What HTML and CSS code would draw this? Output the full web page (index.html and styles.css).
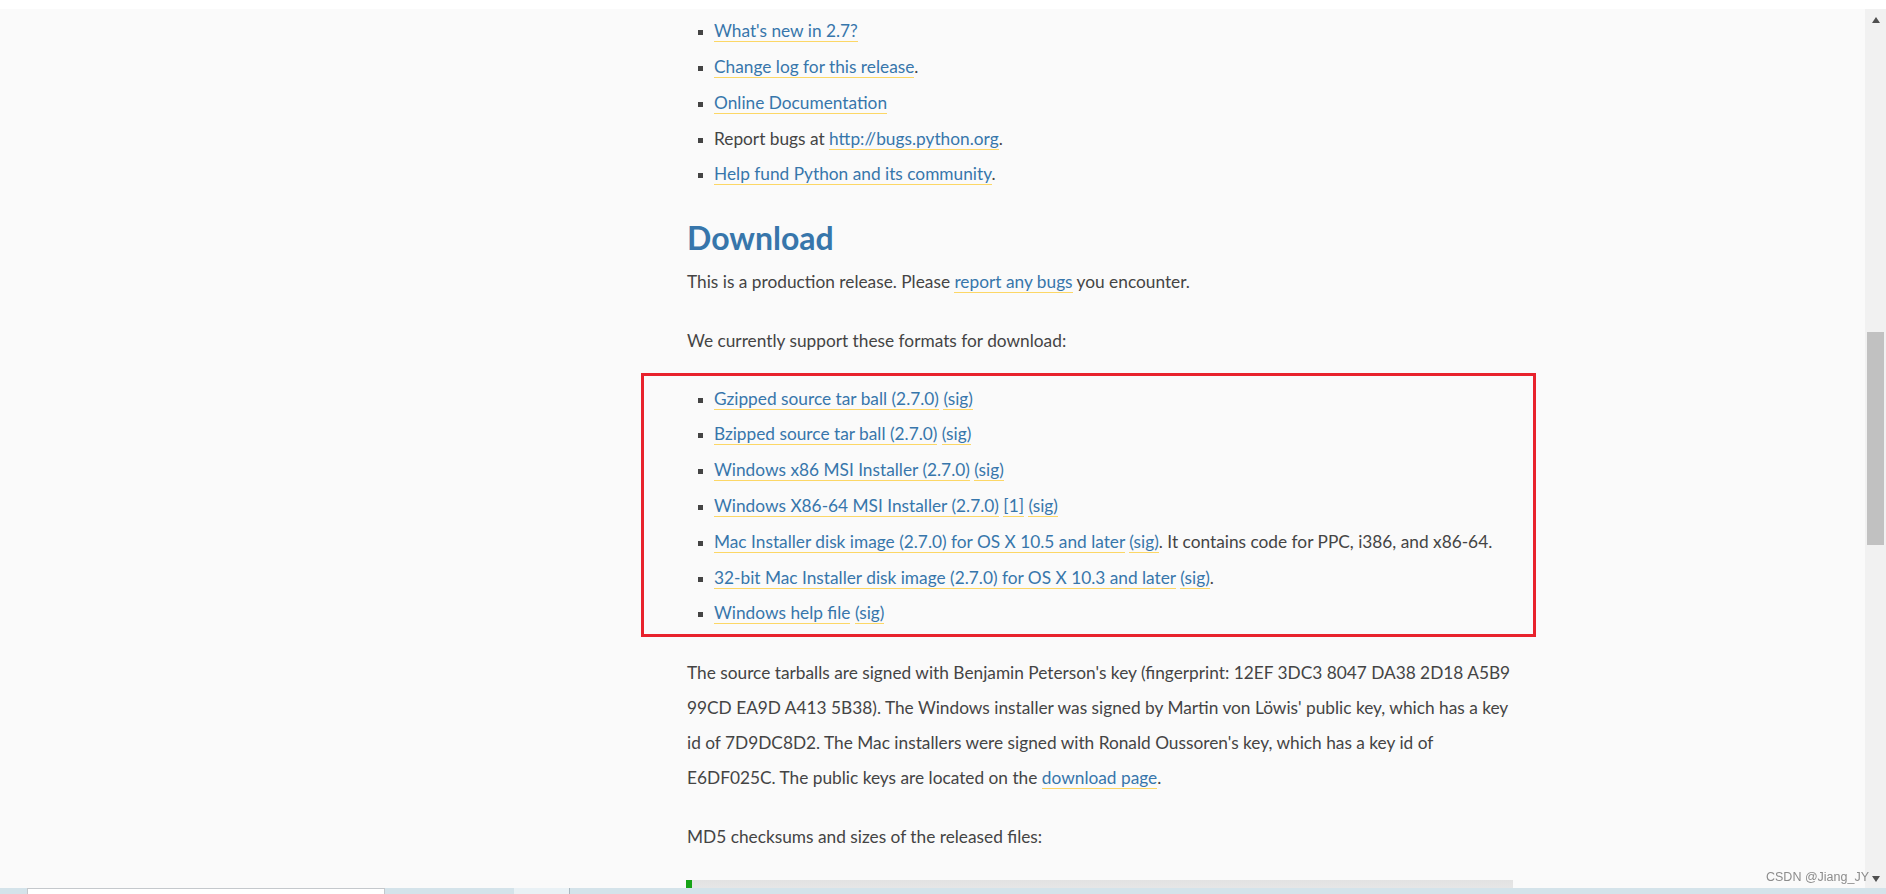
FILE: index.html
```html
<!DOCTYPE html>
<html lang="en">
<head>
    <meta charset="UTF-8">
    <meta name="viewport" content="width=device-width, initial-scale=1.0">
    <title>Python 2.7.0 Release</title>
    <link rel="stylesheet" href="styles.css">
</head>
<body>
    <div class="topline"></div>
    <div class="window">
        <div class="page">
            <div class="content">
                <ul class="links">
                    <li><a href="#">What's new in 2.7?</a></li>
                    <li><a href="#">Change log for this release</a>.</li>
                    <li><a href="#">Online Documentation</a></li>
                    <li>Report bugs at <a href="#">http://bugs.python.org</a>.</li>
                    <li><a href="#">Help fund Python and its community</a>.</li>
                </ul>
                <h2>Download</h2>
                <p class="intro">This is a production release. Please <a href="#">report any bugs</a> you encounter.</p>
                <p class="lead">We currently support these formats for download:</p>
                <div class="highlight">
                    <ul class="links">
                        <li><a href="#">Gzipped source tar ball (2.7.0)</a> <a href="#">(sig)</a></li>
                        <li><a href="#">Bzipped source tar ball (2.7.0)</a> <a href="#">(sig)</a></li>
                        <li><a href="#">Windows x86 MSI Installer (2.7.0)</a> <a href="#">(sig)</a></li>
                        <li><a href="#">Windows X86-64 MSI Installer (2.7.0)</a> <a href="#">[1]</a> <a href="#">(sig)</a></li>
                        <li><a href="#">Mac Installer disk image (2.7.0) for OS X 10.5 and later</a> <a href="#">(sig)</a>. It contains code for PPC, i386, and x86-64.</li>
                        <li><a href="#">32-bit Mac Installer disk image (2.7.0) for OS X 10.3 and later</a> <a href="#">(sig)</a>.</li>
                        <li><a href="#">Windows help file</a> <a href="#">(sig)</a></li>
                    </ul>
                </div>
                <p class="keys">The source tarballs are signed with Benjamin Peterson's key (fingerprint: 12EF 3DC3 8047 DA38 2D18 A5B9 99CD EA9D A413 5B38). The Windows installer was signed by Martin von Löwis' public key, which has a key id of 7D9DC8D2. The Mac installers were signed with Ronald Oussoren's key, which has a key id of E6DF025C. The public keys are located on the <a href="#">download page</a>.</p>
                <p class="md5">MD5 checksums and sizes of the released files:</p>
                <div class="table-head"><span class="mark"></span><span class="bar"></span></div>
            </div>
        </div>
        <div class="scrollbar">
            <span class="arrow-up"></span>
            <div class="thumb"></div>
            <span class="arrow-down"></span>
        </div>
    </div>
    <div class="taskbar">
        <div class="task-input"></div>
        <div class="task-gap"></div>
        <div class="task-light"></div>
        <div class="task-rest"></div>
    </div>
    <div class="watermark">CSDN @Jiang_JY</div>
</body>
</html>
```
FILE: styles.css
```css
*{
    margin: 0;
    padding: 0;
    box-sizing: border-box;
}
html, body{
    width: 1886px;
    height: 894px;
    overflow: hidden;
}
body{
    font-family: Lato, "Liberation Sans", sans-serif;
    font-size: 17.3px;
    line-height: 35.8px;
    color: #444444;
    background-color: #ffffff;
    display: flex;
    flex-direction: column;
}
a{
    color: #3776ab;
    text-decoration: none;
    border-bottom: 1px solid #fcd766;
}
.topline{
    height: 9px;
    background-color: #ffffff;
}
.window{
    height: 879px;
    display: flex;
}
.page{
    flex: 1;
    background-color: #fafafa;
    overflow: hidden;
}
.content{
    margin-left: 687px;
    width: 831px;
}
.links{
    list-style-type: square;
    padding-left: 27px;
}
.links li::marker{
    color: #444444;
    font-size: 14px;
}
.content > .links{
    margin-top: 4.3px;
}
h2{
    color: #3776ab;
    font-size: 32px;
    font-weight: bold;
    line-height: 40px;
    margin: 25.3px 0 6.2px;
}
.intro{
    margin-bottom: 23.6px;
}
.lead{
    margin-bottom: 13.8px;
}
.highlight{
    margin: 0 -18px 18px -46px;
    padding: 4.8px 0 2.4px 43px;
    border: 3px solid #e8222c;
}
.keys{
    line-height: 35.3px;
    margin-bottom: 23.6px;
}
.md5{
    margin-bottom: 25.4px;
}
.table-head{
    display: flex;
    width: 826px;
    height: 20px;
}
.table-head .mark{
    width: 6px;
    background-color: #16a316;
    margin-left: -1px;
}
.table-head .bar{
    flex: 1;
    background: linear-gradient(#e2e2e2, #ececec);
}
.scrollbar{
    width: 21px;
    background-color: #f1f1f1;
    display: flex;
    flex-direction: column;
    align-items: center;
}
.arrow-up{
    margin-top: 8px;
    width: 0;
    height: 0;
    border-left: 4.5px solid transparent;
    border-right: 4.5px solid transparent;
    border-bottom: 6px solid #505050;
}
.thumb{
    margin-top: 309px;
    width: 17px;
    height: 213px;
    background-color: #c1c1c1;
}
.arrow-down{
    margin-top: auto;
    margin-bottom: 6px;
    width: 0;
    height: 0;
    border-left: 4.5px solid transparent;
    border-right: 4.5px solid transparent;
    border-top: 6px solid #505050;
}
.taskbar{
    height: 6px;
    display: flex;
    background-color: #d4e3ea;
}
.task-input{
    margin-left: 27px;
    width: 358px;
    background-color: #ffffff;
    border-top: 1px solid #c4c8cc;
    border-left: 1px solid #c4c8cc;
    border-right: 1px solid #c4c8cc;
}
.task-gap{
    width: 129px;
}
.task-light{
    width: 56px;
    background-color: #e9f1f5;
    border-right: 1px solid #a9b7bf;
}
.task-rest{
    flex: 1;
}
.watermark{
    position: fixed;
    right: 17px;
    top: 868px;
    font-family: "Liberation Sans", Arial, sans-serif;
    font-size: 12.5px;
    line-height: 18px;
    color: #8c8c8c;
}
```
